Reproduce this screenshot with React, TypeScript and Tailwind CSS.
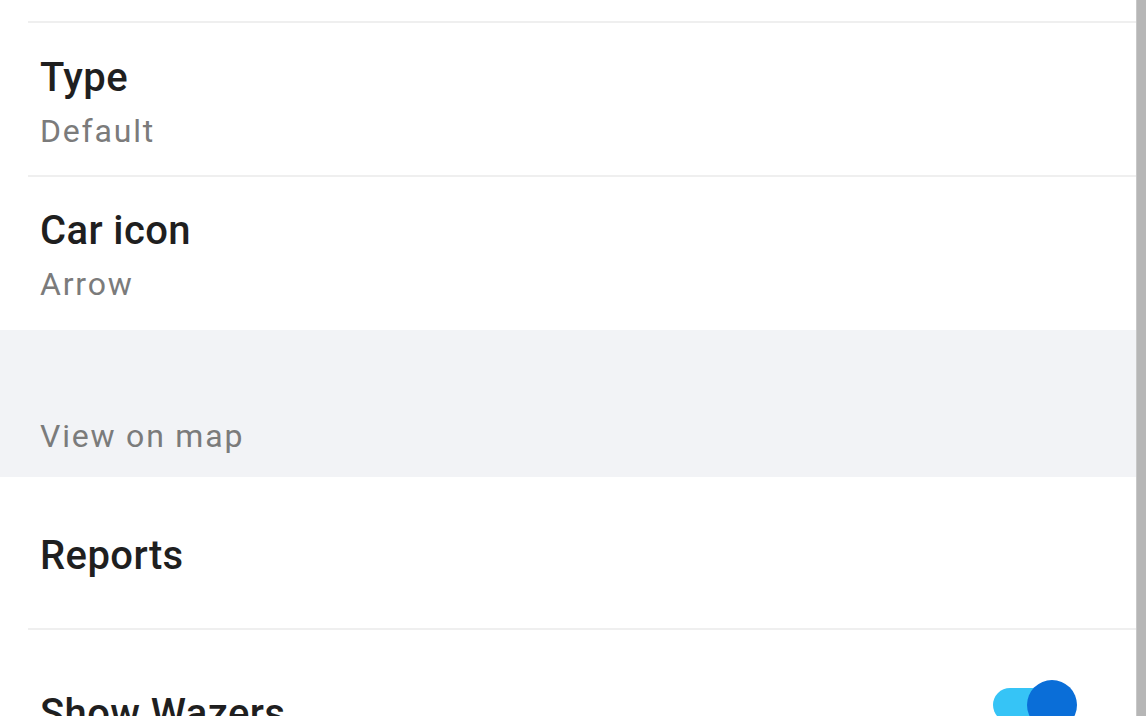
import React from "react";

const font = { fontFamily: "Roboto, 'Noto Sans', sans-serif" };

function Divider() {
  return <div className="ml-[28px] h-[2px] bg-[#efefef]" />;
}

function SettingRow({ title, value, className }: { title: string; value: string; className: string }) {
  return (
    <div className={`pl-[40px] ${className}`}>
      <div className="text-[40px] leading-[48px] font-medium tracking-[0.4px] text-[#1f1f1f]">{title}</div>
      <div className="mt-[9px] text-[32px] leading-[40px] tracking-[1.8px] text-[#7b7b7b]">{value}</div>
    </div>
  );
}

export default function App() {
  return (
    <div className="flex h-[716px] w-full overflow-hidden bg-white" style={font}>
      <div className="flex-1 overflow-hidden">
        <div className="h-[21px]" />
        <Divider />
        <SettingRow title="Type" value="Default" className="h-[152px] pt-[31px]" />
        <Divider />
        <SettingRow title="Car icon" value="Arrow" className="h-[153px] pt-[30px]" />

        {/* section header */}
        <div className="flex h-[147px] items-end bg-[#f2f3f6] pb-[21px] pl-[40px]">
          <span className="text-[32px] leading-[40px] tracking-[1.8px] text-[#7b7b7b]">View on map</span>
        </div>

        <div className="h-[151px] pl-[40px] pt-[55px]">
          <div className="text-[40px] leading-[48px] font-medium tracking-[0.4px] text-[#1f1f1f]">Reports</div>
        </div>
        <Divider />

        <div className="flex items-start justify-between pl-[40px] pr-[59px] pt-[50px]">
          <div className="mt-[10px] text-[40px] leading-[48px] font-medium tracking-[0.4px] text-[#1f1f1f]">Show Wazers</div>
          <div className="relative h-[50px] w-[84px]">
            <div className="absolute left-0 top-[8px] h-[34px] w-[70px] rounded-full bg-[#36c4f6]" />
            <div className="absolute right-0 top-0 h-[50px] w-[50px] rounded-full bg-[#0a6ed8]" />
          </div>
        </div>
      </div>
      <div className="h-full w-[10px] border-l border-[#c8c8c8] bg-[#b6b6b6]" />
    </div>
  );
}
